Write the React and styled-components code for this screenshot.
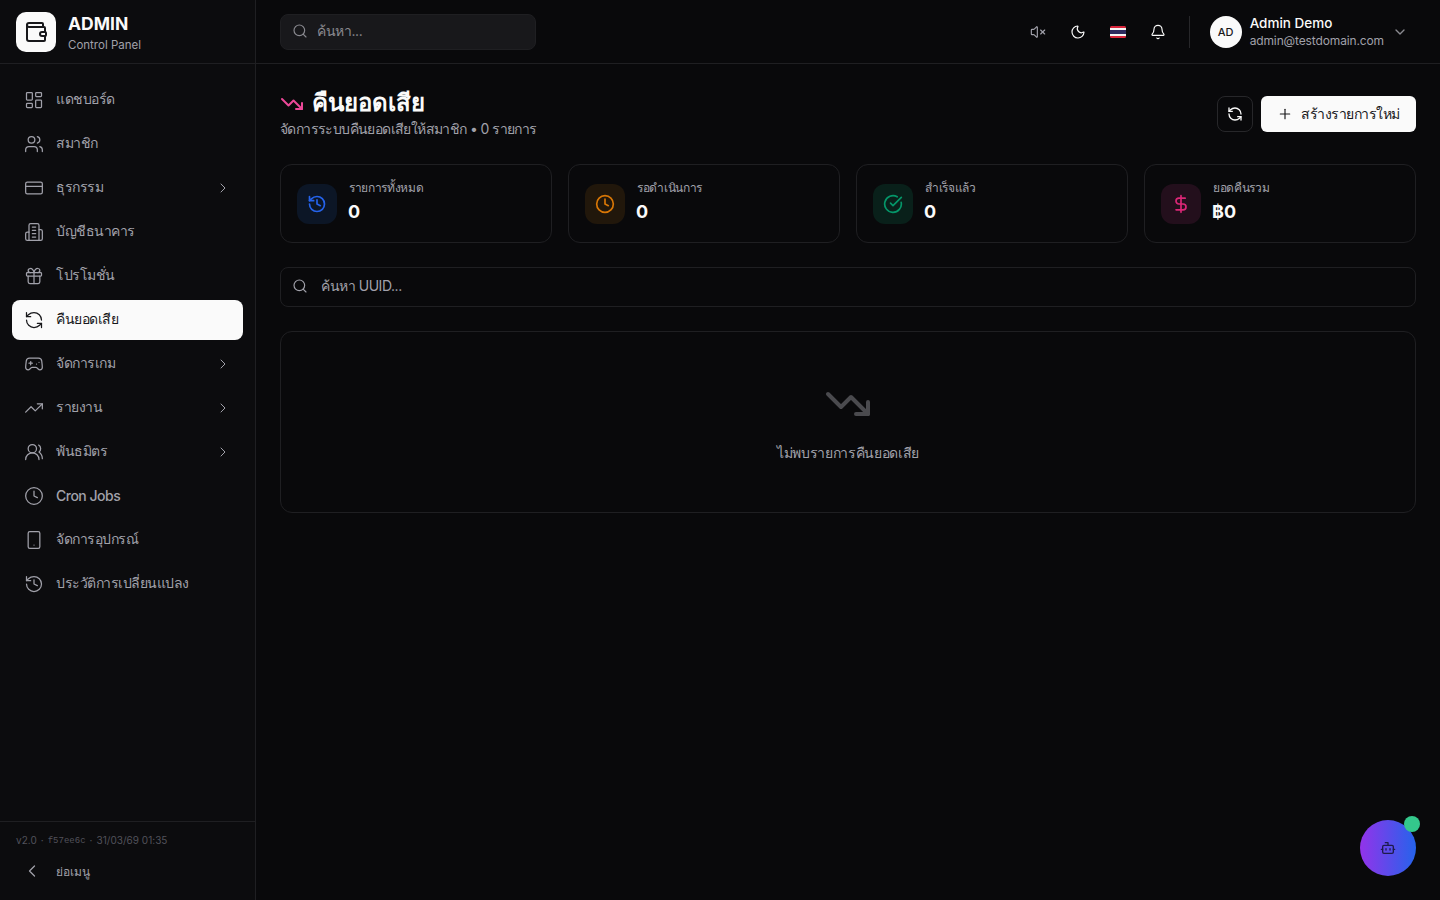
import React from 'react';
import styled, { createGlobalStyle } from 'styled-components';
import {
  Bell, Bot, ChevronDown, ChevronLeft, ChevronRight, CircleCheckBig, Clock, CreditCard,
  DollarSign, Gamepad2, Gift, History, LayoutDashboard, Moon, Plus, RefreshCcw, Search,
  Smartphone, TrendingDown, TrendingUp, Users, UsersRound, VolumeX, Wallet,
} from 'lucide-react';

const GlobalStyle = createGlobalStyle`
  * { box-sizing: border-box; }
  html, body { margin: 0; height: 100%; background: #09090b; }
  body { font-family: Inter, "Noto Sans", sans-serif; color: #fafafa; overflow: hidden; }
`;

// older lucide building-2 shape, the one the page uses
function BankIcon({ size, strokeWidth }) {
  return (
    <svg width={size} height={size} viewBox="0 0 24 24" fill="none" stroke="currentColor" strokeWidth={strokeWidth} strokeLinecap="round" strokeLinejoin="round">
      <path d="M6 22V4a2 2 0 0 1 2-2h8a2 2 0 0 1 2 2v18Z" />
      <path d="M6 12H4a2 2 0 0 0-2 2v6a2 2 0 0 0 2 2h2" />
      <path d="M18 9h2a2 2 0 0 1 2 2v9a2 2 0 0 1-2 2h-2" />
      <path d="M10 6h4" />
      <path d="M10 10h4" />
      <path d="M10 14h4" />
      <path d="M10 18h4" />
    </svg>
  );
}

const navItems = [
  { icon: LayoutDashboard, text: 'แดชบอร์ด' },
  { icon: Users, text: 'สมาชิก' },
  { icon: CreditCard, text: 'ธุรกรรม', more: true },
  { icon: BankIcon, text: 'บัญชีธนาคาร' },
  { icon: Gift, text: 'โปรโมชั่น' },
  { icon: RefreshCcw, text: 'คืนยอดเสีย', active: true },
  { icon: Gamepad2, text: 'จัดการเกม', more: true },
  { icon: TrendingUp, text: 'รายงาน', more: true },
  { icon: UsersRound, text: 'พันธมิตร', more: true },
  { icon: Clock, text: 'Cron Jobs' },
  { icon: Smartphone, text: 'จัดการอุปกรณ์' },
  { icon: History, text: 'ประวัติการเปลี่ยนแปลง' },
];

const stats = [
  { icon: History, label: 'รายการทั้งหมด', value: '0', color: '#2563eb', bg: '#0c1626' },
  { icon: Clock, label: 'รอดำเนินการ', value: '0', color: '#d97706', bg: '#21170b' },
  { icon: CircleCheckBig, label: 'สำเร็จแล้ว', value: '0', color: '#059669', bg: '#09201a' },
  { icon: DollarSign, label: 'ยอดคืนรวม', value: '฿0', color: '#db2777', bg: '#230f1c' },
];

function ThaiFlag() {
  return (
    <svg width="16" height="12" viewBox="0 0 16 12">
      <rect width="16" height="12" rx="1.5" fill="#d8263c" />
      <rect y="2" width="16" height="8" fill="#f5f5f5" />
      <rect y="4" width="16" height="4" fill="#2d2a5e" />
    </svg>
  );
}

export default function App() {
  return (
    <Shell>
      <GlobalStyle />
      <Sidebar>
        <Brand>
          <LogoBox><Wallet size={24} strokeWidth={2} /></LogoBox>
          <BrandText>
            <BrandName>ADMIN</BrandName>
            <BrandSub>Control Panel</BrandSub>
          </BrandText>
        </Brand>
        <Nav>
          {navItems.map(item => (
            <NavItem key={item.text} $active={item.active}>
              <item.icon size={20} strokeWidth={1.5} />
              <NavText>{item.text}</NavText>
              {item.more && <ChevronRight size={16} strokeWidth={1.5} />}
            </NavItem>
          ))}
        </Nav>
        <SideFoot>
          <Version>
            <span>v2.0</span><span>·</span><Hash>f57ee6c</Hash><span>·</span><span>31/03/69 01:35</span>
          </Version>
          <Collapse>
            <ChevronLeft size={20} strokeWidth={1.5} />
            <span>ย่อเมนู</span>
          </Collapse>
        </SideFoot>
      </Sidebar>
      <Main>
        <Topbar>
          <TopSearch>
            <Search size={16} strokeWidth={1.75} />
            <span>ค้นหา...</span>
          </TopSearch>
          <TopRight>
            <TopIcon $dim><VolumeX size={16} strokeWidth={1.75} /></TopIcon>
            <TopIcon><Moon size={16} strokeWidth={1.75} /></TopIcon>
            <TopIcon><ThaiFlag /></TopIcon>
            <TopIcon><Bell size={16} strokeWidth={1.75} /></TopIcon>
            <Divider />
            <UserBox>
              <Avatar>AD</Avatar>
              <UserText>
                <UserName>Admin Demo</UserName>
                <UserMail>admin@testdomain.com</UserMail>
              </UserText>
              <ChevronDown size={16} strokeWidth={2} color="#8a8a90" />
            </UserBox>
          </TopRight>
        </Topbar>
        <Content>
          <PageHead>
            <div>
              <Title>
                <TrendingDown size={24} strokeWidth={2} color="#ec4899" />
                <TitleText>คืนยอดเสีย</TitleText>
              </Title>
              <Subtitle>จัดการระบบคืนยอดเสียให้สมาชิก • 0 รายการ</Subtitle>
            </div>
            <Actions>
              <IconButton><RefreshCcw size={16} strokeWidth={2} /></IconButton>
              <PrimaryButton><Plus size={16} strokeWidth={1.75} />สร้างรายการใหม่</PrimaryButton>
            </Actions>
          </PageHead>
          <StatGrid>
            {stats.map(s => (
              <StatCard key={s.label}>
                <StatIcon $bg={s.bg} $color={s.color}><s.icon size={20} strokeWidth={2} /></StatIcon>
                <StatBody>
                  <StatLabel>{s.label}</StatLabel>
                  <StatValue>{s.value}</StatValue>
                </StatBody>
              </StatCard>
            ))}
          </StatGrid>
          <FilterBar>
            <Search size={16} strokeWidth={1.75} />
            <span>ค้นหา UUID...</span>
          </FilterBar>
          <EmptyCard>
            <TrendingDown size={48} strokeWidth={2} color="#4a4a4e" />
            <EmptyText>ไม่พบรายการคืนยอดเสีย</EmptyText>
          </EmptyCard>
        </Content>
      </Main>
      <ChatButton>
        <Bot size={16} strokeWidth={2} color="#1e1b4b" />
        <ChatDot />
      </ChatButton>
    </Shell>
  );
}

const Shell = styled.div`
  display: flex;
  height: 100vh;
  background: #09090b;
`;

const Sidebar = styled.aside`
  width: 256px;
  flex: none;
  display: flex;
  flex-direction: column;
  background: #0c0c0e;
  border-right: 1px solid #1f1f22;
`;

const Brand = styled.div`
  height: 64px;
  flex: none;
  display: flex;
  align-items: center;
  gap: 12px;
  padding: 0 16px;
  border-bottom: 1px solid #1f1f22;
`;

const LogoBox = styled.div`
  width: 40px;
  height: 40px;
  border-radius: 10px;
  background: #fafafa;
  color: #18181b;
  display: flex;
  align-items: center;
  justify-content: center;
`;

const BrandText = styled.div`
  display: flex;
  flex-direction: column;
  gap: 2px;
  padding-top: 3px;
`;

const BrandName = styled.div`
  font-size: 17.5px;
  font-weight: 700;
  line-height: 22px;
`;

const BrandSub = styled.div`
  font-size: 11.5px;
  line-height: 16px;
  color: #a1a1aa;
`;

const Nav = styled.nav`
  flex: 1;
  display: flex;
  flex-direction: column;
  gap: 4px;
  padding: 16px 12px;
`;

const NavItem = styled.div`
  height: 40px;
  display: flex;
  align-items: center;
  gap: 12px;
  padding: 0 12px;
  border-radius: 8px;
  font-size: 14px;
  font-weight: 500;
  letter-spacing: -0.5px;
  background: ${p => (p.$active ? '#fafafa' : 'transparent')};
  color: ${p => (p.$active ? '#18181b' : '#a1a1aa')};
`;

const NavText = styled.span`
  flex: 1;
  padding-bottom: 2px;
`;

const SideFoot = styled.div`
  flex: none;
  height: 79px;
  border-top: 1px solid #1f1f22;
  padding: 11px 16px;
`;

const Version = styled.div`
  display: flex;
  gap: 4px;
  font-size: 10px;
  line-height: 14px;
  letter-spacing: 0.02px;
  color: #52525b;
`;

const Hash = styled.span`
  font-family: "Liberation Mono", monospace;
  font-size: 9px;
  padding-top: 1px;
`;

const Collapse = styled.div`
  display: flex;
  align-items: center;
  gap: 14px;
  margin-top: 7px;
  padding: 0 6px;
  height: 32px;
  font-size: 12px;
  font-weight: 500;
  color: #a1a1aa;
`;

const Main = styled.main`
  flex: 1;
  min-width: 0;
  display: flex;
  flex-direction: column;
`;

const Topbar = styled.header`
  height: 64px;
  flex: none;
  display: flex;
  align-items: center;
  justify-content: space-between;
  padding: 0 24px;
  border-bottom: 1px solid #1f1f22;
`;

const TopSearch = styled.div`
  width: 256px;
  height: 36px;
  display: flex;
  align-items: center;
  gap: 9px;
  padding: 0 0 2px 11px;
  border-radius: 8px;
  background: #18181b;
  border: 1px solid #1f1f22;
  color: #8a8a90;
  font-size: 14px;
  letter-spacing: -0.4px;
`;

const TopRight = styled.div`
  display: flex;
  align-items: center;
  gap: 4px;
`;

const TopIcon = styled.div`
  width: 36px;
  height: 36px;
  display: flex;
  align-items: center;
  justify-content: center;
  color: ${p => (p.$dim ? '#a1a1aa' : '#fafafa')};
`;

const Divider = styled.div`
  width: 1px;
  height: 32px;
  background: #27272a;
  margin: 0 4px 0 9px;
`;

const UserBox = styled.div`
  display: flex;
  align-items: center;
  gap: 8px;
  padding: 0 8px 0 12px;
`;

const Avatar = styled.div`
  width: 32px;
  height: 32px;
  border-radius: 50%;
  background: #fafafa;
  color: #18181b;
  font-size: 11px;
  font-weight: 500;
  display: flex;
  align-items: center;
  justify-content: center;
`;

const UserText = styled.div`
  display: flex;
  flex-direction: column;
`;

const UserName = styled.div`
  font-size: 13.5px;
  font-weight: 500;
  line-height: 16px;
  margin-bottom: 2px;
`;

const UserMail = styled.div`
  font-size: 12px;
  line-height: 16px;
  letter-spacing: -0.13px;
  color: #a1a1aa;
`;

const Content = styled.div`
  flex: 1;
  padding: 24px;
  display: flex;
  flex-direction: column;
  gap: 24px;
`;

const PageHead = styled.div`
  display: flex;
  align-items: flex-start;
  justify-content: space-between;
  min-height: 52px;
`;

const Title = styled.h1`
  margin: 0;
  height: 31px;
  display: flex;
  align-items: center;
  gap: 8px;
  font-size: 24px;
  line-height: 31px;
  font-weight: 700;
`;

const TitleText = styled.span`
  padding-bottom: 2px;
`;

const Subtitle = styled.p`
  margin: 0;
  font-size: 14px;
  line-height: 19px;
  letter-spacing: -0.6px;
  color: #a1a1aa;
`;

const Actions = styled.div`
  display: flex;
  gap: 8px;
  align-self: center;
`;

const IconButton = styled.div`
  width: 36px;
  height: 36px;
  border-radius: 8px;
  border: 1px solid #27272a;
  display: flex;
  align-items: center;
  justify-content: center;
`;

const PrimaryButton = styled.div`
  height: 36px;
  display: flex;
  align-items: center;
  gap: 8px;
  padding: 0 16px;
  border-radius: 6px;
  background: #fafafa;
  color: #18181b;
  font-size: 14px;
  letter-spacing: -0.47px;
`;

const StatGrid = styled.div`
  display: grid;
  grid-template-columns: repeat(4, 1fr);
  gap: 16px;
`;

const StatCard = styled.div`
  height: 79px;
  display: flex;
  align-items: center;
  gap: 12px;
  padding: 0 16px;
  border: 1px solid #1f1f22;
  border-radius: 12px;
`;

const StatIcon = styled.div`
  width: 40px;
  height: 40px;
  border-radius: 12px;
  display: flex;
  align-items: center;
  justify-content: center;
  background: ${p => p.$bg};
  color: ${p => p.$color};
`;

const StatBody = styled.div`
  padding-bottom: 2px;
`;

const StatLabel = styled.div`
  font-size: 12px;
  line-height: 16px;
  letter-spacing: -0.35px;
  color: #a1a1aa;
`;

const StatValue = styled.div`
  font-size: 18px;
  font-weight: 700;
  line-height: 28px;
  margin: 2px 0 0 -1px;
`;

const FilterBar = styled.div`
  height: 40px;
  display: flex;
  align-items: center;
  gap: 13px;
  padding: 0 0 2px 11px;
  border: 1px solid #1f1f22;
  border-radius: 8px;
  color: #a1a1aa;
  font-size: 14px;
  letter-spacing: -0.45px;
`;

const EmptyCard = styled.div`
  height: 182px;
  display: flex;
  flex-direction: column;
  align-items: center;
  justify-content: center;
  gap: 15px;
  padding-bottom: 2px;
  border: 1px solid #1f1f22;
  border-radius: 12px;
`;

const EmptyText = styled.div`
  font-size: 14px;
  line-height: 20px;
  letter-spacing: -0.35px;
  color: #a1a1aa;
`;

const ChatButton = styled.div`
  position: fixed;
  right: 24px;
  bottom: 24px;
  width: 56px;
  height: 56px;
  border-radius: 50%;
  background: linear-gradient(to right, #9333ea, #2563eb);
  display: flex;
  align-items: center;
  justify-content: center;
`;

const ChatDot = styled.span`
  position: absolute;
  top: -4px;
  right: -4px;
  width: 16px;
  height: 16px;
  border-radius: 50%;
  background: #34c88c;
`;
